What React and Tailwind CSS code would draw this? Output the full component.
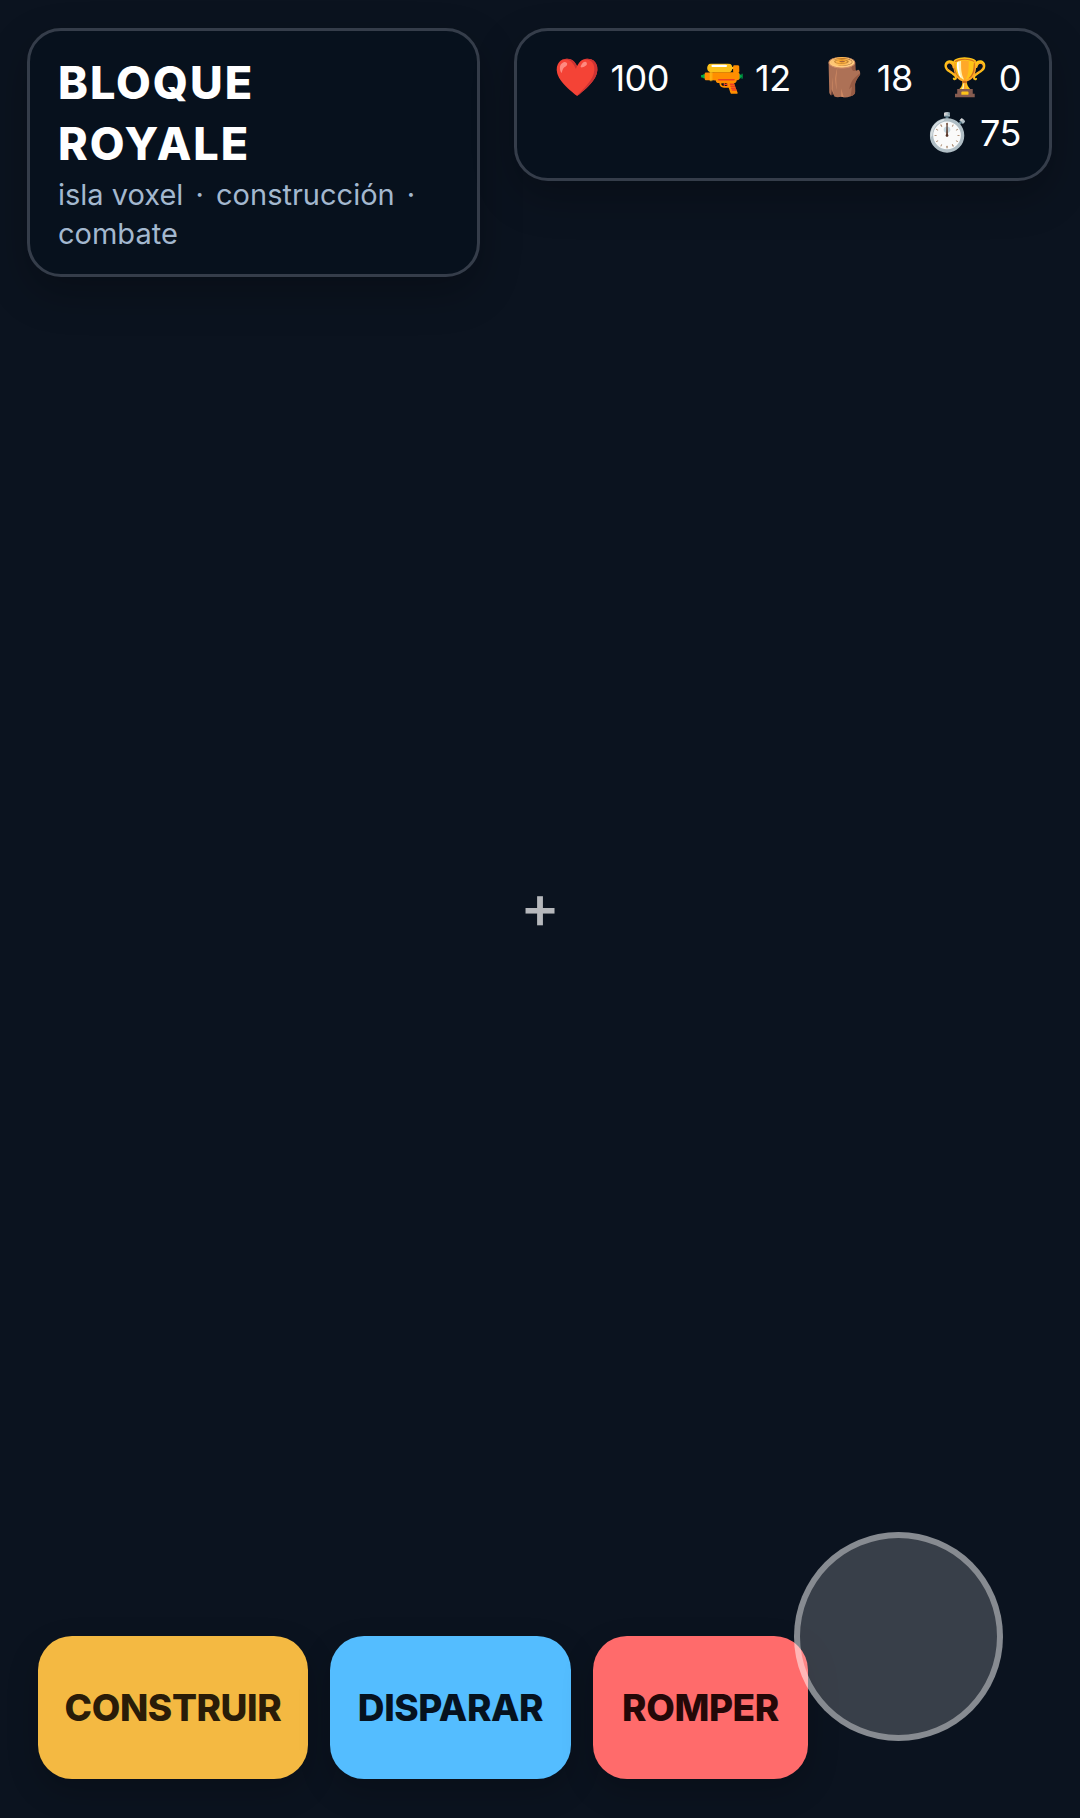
import React from "react";

const Stat = ({ icon, value }) => (
  <span className="inline-flex items-center gap-[10px]">
    <span className="text-[37px] leading-[48px] font-['Noto_Color_Emoji','Inter',sans-serif]">{icon}</span>
    <span className="tracking-[-0.5px]">{value}</span>
  </span>
);

const Btn = ({ label, cls }) => (
  <button className={`h-[143px] rounded-[34px] flex items-center justify-center text-[37px] font-extrabold tracking-[-0.4px] shadow-[0_12px_32px_rgba(0,0,0,0.2)] ${cls}`}>
    {label}
  </button>
);

export default function App() {
  return (
    <div className="relative w-full h-[1818px] bg-[#0b131f] overflow-hidden flex flex-col justify-between font-['Inter',sans-serif]">
      <div className="flex items-start justify-between pt-[28px] pl-[27px] pr-[28px]">
        <div className="w-[453px] h-[249px] rounded-[34px] border-[3px] border-[#353d4a] bg-[#07111d] pl-[28px] pt-[21px] shadow-[0_16px_40px_rgba(0,0,0,0.25)]">
          <h1 className="text-[45px] leading-[61px] font-extrabold tracking-[2px] text-white w-[270px]">BLOQUE ROYALE</h1>
          <p className="mt-[1px] text-[29px] leading-[39px] text-[#a3b8cf] w-[390px]">
            isla voxel <span className="mx-[4px]">·</span> construcción <span className="mx-[4px]">·</span> combate
          </p>
        </div>
        <div className="w-[538px] h-[153px] rounded-[34px] border-[3px] border-[#353d4a] bg-[#07111d] pr-[28px] pt-[23px] shadow-[0_16px_40px_rgba(0,0,0,0.25)]">
          <div className="flex flex-wrap justify-end gap-x-[30px] gap-y-[7px] text-[36px] leading-[48px] text-white">
            <Stat icon="❤️" value="100" />
            <Stat icon="🔫" value="12" />
            <Stat icon="🪵" value="18" />
            <Stat icon="🏆" value="0" />
            <Stat icon="⏱️" value="75" />
          </div>
        </div>
      </div>

      <div className="absolute left-[524px] top-[882px] w-[32px] h-[48px] flex items-center justify-center text-[60px] leading-[48px] font-medium text-white/70">+</div>

      <div className="flex gap-[22px] pl-[38px] pb-[39px]">
        <Btn label="CONSTRUIR" cls="w-[270px] bg-[#f4b942] text-[#2a1c08]" />
        <Btn label="DISPARAR" cls="w-[241px] bg-[#54bdff] text-[#06121f]" />
        <Btn label="ROMPER" cls="w-[215px] bg-[#ff6b6b] text-[#240808]" />
      </div>

      <div className="absolute left-[794px] top-[1532px] w-[209px] h-[209px] rounded-full border-[6px] border-white/40 bg-white/[0.19]" />
    </div>
  );
}
